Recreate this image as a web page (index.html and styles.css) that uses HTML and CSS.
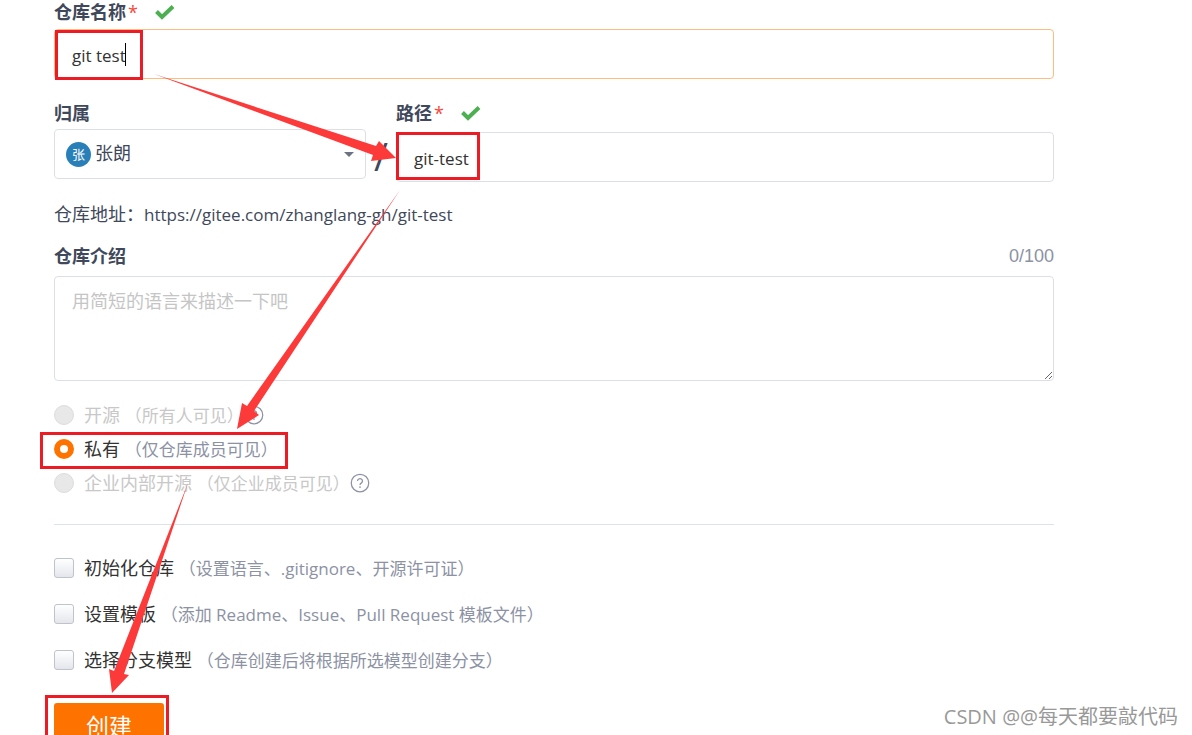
FILE: index.html
```html
<!DOCTYPE html>
<html lang="zh-CN">
<head>
  <meta charset="UTF-8">
  <meta name="viewport" content="width=device-width, initial-scale=1.0">
  <title>新建仓库</title>
  <link rel="stylesheet" href="styles.css">
</head>
<body>
  <form class="project-form">
    <!-- Repository name -->
    <div class="field">
      <div class="field-head">
        <label for="name">仓库名称</label>
        <span class="required">*</span>
        <svg class="check" viewBox="0 0 20 16"><path d="M1.5 7.5 7 13 18 2.5" /></svg>
      </div>
      <input class="text-input focused" type="text" id="name" value="git test">
    </div>

    <!-- Owner and path -->
    <div class="namespace-row">
      <div class="field owner">
        <div class="field-head"><label for="owner">归属</label></div>
        <div class="owner-select">
          <select id="owner">
            <option>张朗</option>
          </select>
          <span class="avatar">张</span>
          <svg class="caret" viewBox="0 0 10 6"><path d="M0 0h10L5 5z" /></svg>
        </div>
      </div>
      <span class="slash">/</span>
      <div class="field path">
        <div class="field-head">
          <label for="path">路径</label>
          <span class="required">*</span>
          <svg class="check" viewBox="0 0 20 16"><path d="M1.5 7.5 7 13 18 2.5" /></svg>
        </div>
        <input class="text-input" type="text" id="path" value="git-test">
      </div>
    </div>

    <p class="address">仓库地址：<span class="latin">https://gitee.com/zhanglang-gh/git-test</span></p>

    <!-- Description -->
    <div class="field">
      <div class="field-head">
        <label for="description">仓库介绍</label>
        <span class="counter">0/100</span>
      </div>
      <textarea id="description" placeholder="用简短的语言来描述一下吧"></textarea>
    </div>

    <!-- Visibility -->
    <div class="visibility">
      <div class="option disabled">
        <input type="radio" name="visibility" id="public" disabled>
        <label for="public">开源 <span class="hint">（所有人可见）</span></label>
        <svg class="help" viewBox="0 0 16 16"><circle cx="8" cy="8" r="7" /><path d="M6 6.4a2 1.9 0 1 1 3 1.7c-.7.4-1 .7-1 1.4M8 10.6v1.3" /></svg>
      </div>
      <div class="option">
        <input type="radio" name="visibility" id="private" checked>
        <label for="private">私有 <span class="hint">（仅仓库成员可见）</span></label>
      </div>
      <div class="option disabled">
        <input type="radio" name="visibility" id="inner" disabled>
        <label for="inner">企业内部开源 <span class="hint">（仅企业成员可见）</span></label>
        <svg class="help" viewBox="0 0 16 16"><circle cx="8" cy="8" r="7" /><path d="M6 6.4a2 1.9 0 1 1 3 1.7c-.7.4-1 .7-1 1.4M8 10.6v1.3" /></svg>
      </div>
    </div>

    <!-- Extra settings -->
    <div class="settings">
      <div class="option">
        <input type="checkbox" id="init">
        <label for="init">初始化仓库 <span class="hint">（设置语言、.gitignore、开源许可证）</span></label>
      </div>
      <div class="option">
        <input type="checkbox" id="template">
        <label for="template">设置模板 <span class="hint">（添加 Readme、Issue、Pull Request 模板文件）</span></label>
      </div>
      <div class="option">
        <input type="checkbox" id="branch">
        <label for="branch">选择分支模型 <span class="hint">（仓库创建后将根据所选模型创建分支）</span></label>
      </div>
    </div>

    <button class="submit" type="submit">创建</button>
  </form>

  <!-- Step marks drawn over the form -->
  <svg class="marks" width="1192" height="735" viewBox="0 0 1192 735">
    <path class="cursor" d="M125.5 43v23" />
    <g class="boxes">
      <rect x="56.5" y="31.5" width="85" height="47" />
      <rect x="397.5" y="133.5" width="81" height="45" />
      <rect x="41.5" y="433.5" width="245" height="34" />
      <rect x="46.5" y="696.5" width="121" height="60" />
    </g>
    <g class="arrows">
      <path d="M154 74 376 146 379 141 396 158 371 161 373 155z" />
      <path d="M400 190 254 411 259 415 237 429 242 403 247 406z" />
      <path d="M188 483 124 674 129 675 112 693 109 669 114 671z" />
    </g>
  </svg>
  <div class="watermark">CSDN @@每天都要敲代码</div>
</body>
</html>
```
FILE: styles.css
```css
* {
  box-sizing: border-box;
}
html {
  overflow: hidden;
}
body {
  margin: 0;
  background: #fff;
  color: #40485b;
  font-family: "Open Sans", "Noto Sans CJK SC", sans-serif;
  font-size: 18px;
  line-height: 24px;
}
input,
select,
textarea,
button {
  font: inherit;
}
.project-form {
  padding: 0 138px 0 54px;
}
.field-head {
  display: flex;
  align-items: center;
  height: 24px;
  margin-bottom: 5px;
}
.field-head label {
  font-weight: bold;
}
.required {
  margin-left: 2px;
  color: #f5483b;
}
.check {
  width: 20px;
  height: 16px;
  margin-left: 17px;
  fill: none;
  stroke: #4caf50;
  stroke-width: 4;
}
.text-input {
  display: block;
  width: 100%;
  height: 50px;
  padding: 2px 17px 0;
  border: 1px solid #dce0e6;
  border-radius: 4px;
  color: #333;
  font-size: 17px;
  outline: none;
}
.text-input.focused {
  border-color: #fbbd80;
}
.namespace-row {
  display: flex;
  margin-top: 22px;
}
.owner {
  flex: 0 0 312px;
}
.owner .field-head {
  margin-bottom: 4px;
}
.path {
  flex: 1;
}
.path .field-head {
  margin-bottom: 7px;
}
.owner-select {
  position: relative;
}
.owner-select select {
  width: 100%;
  height: 50px;
  padding: 0 40px 2px;
  border: 1px solid #dce0e6;
  border-radius: 4px;
  background: #fff;
  color: #40485b;
  appearance: none;
}
.avatar {
  position: absolute;
  left: 12px;
  top: 13px;
  width: 25px;
  height: 25px;
  border-radius: 50%;
  background: #2980b9;
  color: #fff;
  font-size: 13px;
  line-height: 25px;
  text-align: center;
}
.caret {
  position: absolute;
  right: 12px;
  top: 23px;
  width: 10px;
  height: 6px;
  fill: #6b7283;
}
.slash {
  width: 30px;
  padding-top: 43px;
  font-size: 38px;
  text-align: center;
}
.address {
  margin: 20px 0 17px;
}
.latin {
  font-size: 17px;
}
.counter {
  margin-left: auto;
  color: #8c92a4;
  font-family: "Liberation Sans", sans-serif;
}
textarea {
  display: block;
  width: 100%;
  height: 105px;
  margin-top: 8px;
  padding: 12px 17px;
  border: 1px solid #dce0e6;
  border-radius: 4px;
  outline: none;
  resize: vertical;
}
textarea::placeholder {
  color: #c5c5c5;
}
.visibility {
  padding: 17px 0 24px;
  border-bottom: 1px solid #dce3ea;
}
.option {
  display: flex;
  align-items: center;
  height: 34px;
  color: #333;
}
.option input {
  flex: none;
  width: 20px;
  height: 20px;
  margin: 0 10px 0 0;
  appearance: none;
}
.option input[type="radio"] {
  border: 1px solid #ddd;
  border-radius: 50%;
  background: #e8e8e8;
}
.option input[type="radio"]:checked {
  border: 6px solid #fe7300;
  background: #fff;
}
.option input[type="checkbox"] {
  border: 1px solid #c0c3cb;
  border-radius: 3px;
  background: linear-gradient(#fff, #e4e6ec);
}
.hint {
  color: #8c92a4;
  font-size: 17px;
}
.disabled,
.disabled .hint {
  color: #c8c8c8;
}
.help {
  width: 20px;
  height: 20px;
  fill: none;
  stroke: #8c92a4;
}
.settings {
  display: grid;
  gap: 12px;
  padding: 26px 0;
}
.submit {
  width: 110px;
  height: 46px;
  border: none;
  border-radius: 3px;
  background: #fe7300;
  color: #fff;
  font-size: 23px;
}
.marks {
  position: absolute;
  left: 0;
  top: 0;
  pointer-events: none;
}
.cursor {
  stroke: #000;
}
.boxes {
  fill: none;
  stroke: #ed1c24;
  stroke-width: 3;
}
.arrows {
  fill: #fd3a3a;
}
.watermark {
  position: absolute;
  right: 14px;
  bottom: 6px;
  color: #999;
  font-size: 20px;
}
```
